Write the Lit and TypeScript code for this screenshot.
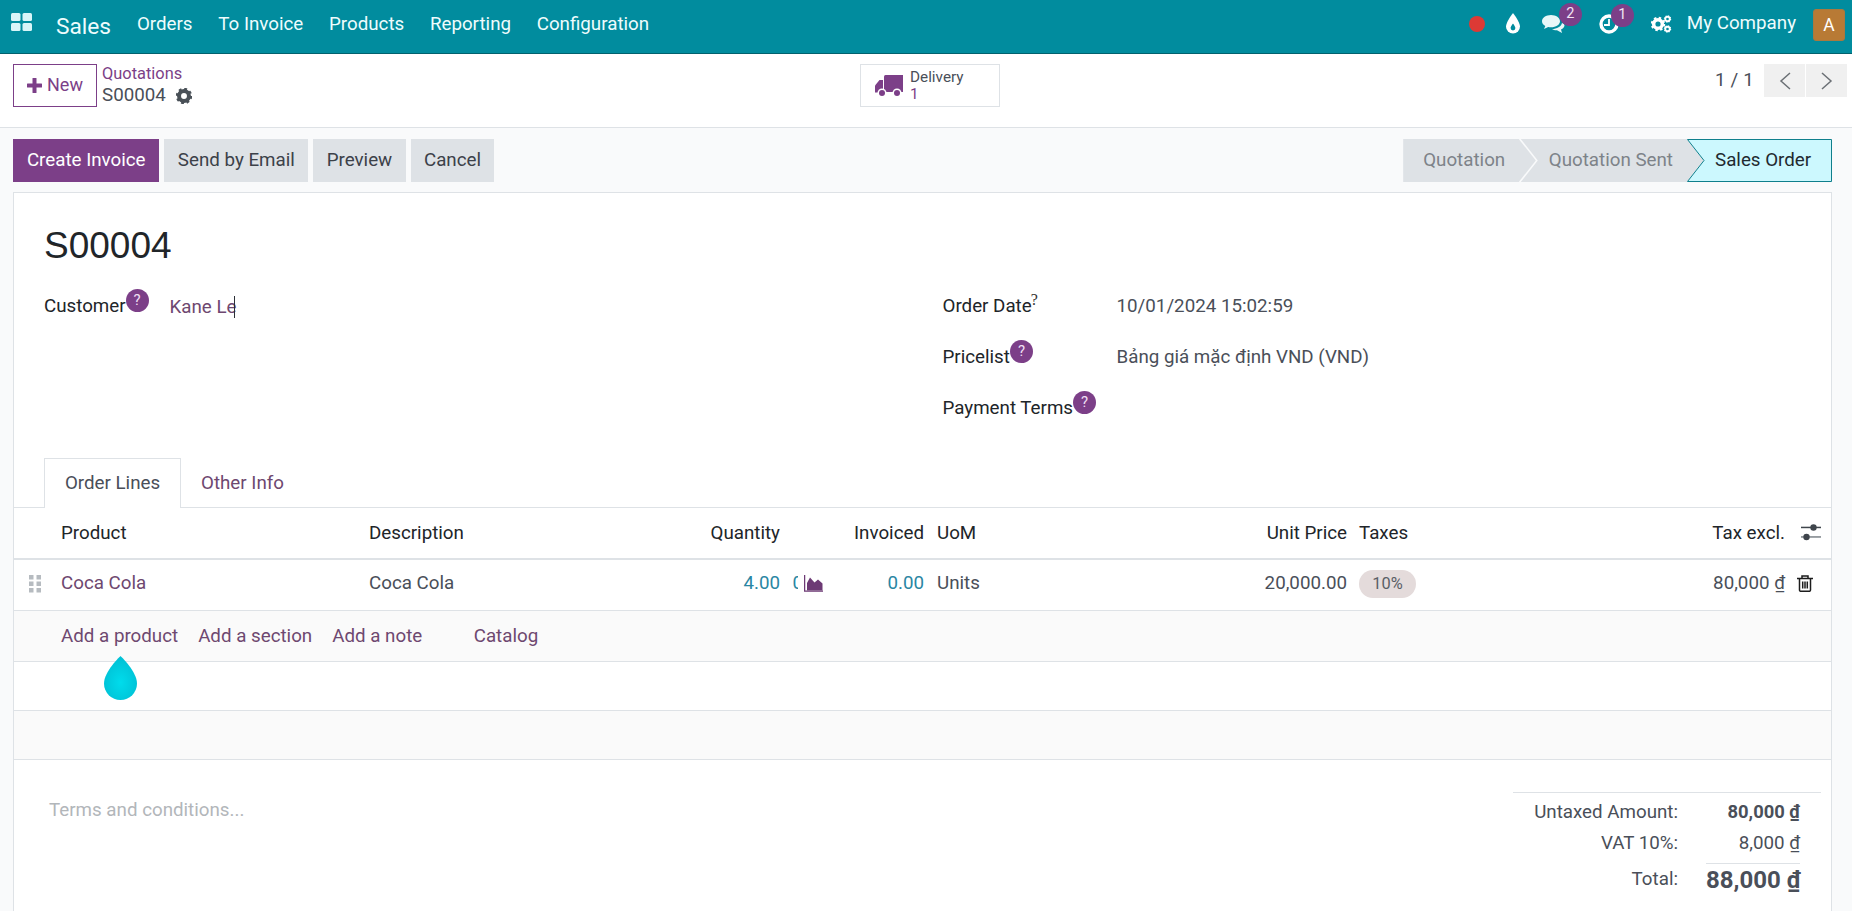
import { LitElement, html, css, svg } from "lit";
import { customElement } from "lit/decorators.js";

const gear = (cx: number, cy: number, r: number, c: string) => svg`
  <circle cx=${cx} cy=${cy} r=${r * 0.62} fill="none" stroke=${c} stroke-width=${r * 0.5}></circle>
  <circle cx=${cx} cy=${cy} r=${r * 0.88} fill="none" stroke=${c} stroke-width=${r * 0.3} stroke-dasharray=${`${r * 0.35} ${r * 0.341}`}></circle>`;

@customElement("app-root")
export class AppRoot extends LitElement {
  static styles = css`
    :host { display: flex; flex-direction: column; width: 1852px; height: 911px; overflow: hidden; background: #f9fafb; font-family: Roboto, sans-serif; font-size: 18.75px; color: #4a4f59; line-height: 1.2; }
    * { box-sizing: border-box; }
    svg { display: block; flex: none; }
    .top { height: 54px; flex: none; background: #018c9e; border-bottom: 1px solid #02616d; color: #eefcfd; display: flex; align-items: center; padding: 0 7px 0 11px; }
    .grid-ico { margin-right: 24px; margin-top: -9px; }
    .brand { font-size: 22.7px; margin-right: 13px; }
    .menu { padding: 0 12.85px; margin-top: -4px; }
    .spacer { flex: 1; }
    .sys { display: flex; align-items: center; margin-top: -6px; }
    .rec { width: 16px; height: 16px; border-radius: 50%; background: #dc3a35; margin-right: 20px; }
    .with-badge { position: relative; }
    .badge { position: absolute; width: 23px; height: 23px; border-radius: 50%; background: #7c3f88; color: #f2e6f4; font-size: 14.5px; text-align: center; line-height: 21px; }
    .company { margin-left: 15px; margin-right: 17px; white-space: nowrap; }
    .avatar { width: 32px; height: 32px; border-radius: 3px; background: #b87a35; border: 1px solid #a9793f; color: #fff; text-align: center; line-height: 30px; font-size: 17.5px; margin-top: 2px; }

    .cp { height: 74px; flex: none; background: #fff; border-bottom: 1px solid #dee2e6; display: flex; align-items: flex-start; padding: 10px 5px 0 13px; }
    .cp-left { width: 847px; display: flex; align-items: flex-start; }
    .new { width: 84px; height: 43px; border: 1px solid #7c3f88; display: flex; align-items: center; justify-content: center; gap: 5px; color: #7c3f88; font-size: 18px; padding-bottom: 1px; }
    .crumbs { margin-left: 5px; }
    .crumb1 { color: #7c3f88; font-size: 16.4px; line-height: 20px; }
    .crumb2 { line-height: 23px; display: flex; align-items: center; gap: 10px; }
    .delivery { width: 140px; height: 43px; border: 1px solid #dee2e6; display: flex; align-items: center; padding-left: 14px; gap: 7px; }
    .delivery-text { font-size: 15.3px; line-height: 17px; }
    .delivery-n { color: #7c3f88; }
    .pager { margin-left: auto; display: flex; align-items: center; height: 33px; }
    .pager-num { margin-right: 9px; letter-spacing: .2px; }
    .pg { width: 41px; height: 33px; background: #f0f0f0; margin-left: 1px; display: flex; align-items: center; justify-content: center; }

    .actions { flex: none; display: flex; padding: 11px 20px 10px 13px; }
    .btn { height: 43px; display: flex; align-items: center; background: #dee2e6; color: #3c4149; padding: 0 13.4px; margin-right: 5px; }
    .btn.primary { background: #7c3f88; color: #fff; padding: 0 13.9px; }
    .status { margin-left: auto; display: flex; height: 43px; }
    .st { display: flex; align-items: center; background: #dee2e6; color: #7d8389; height: 43px; white-space: nowrap; }
    .st1 { padding: 0 30.6px 0 20px; clip-path: polygon(0 0, calc(100% - 17px) 0, 100% 50%, calc(100% - 17px) 100%, 0 100%); }
    .st2 { padding: 0 31px 0 28px; margin-left: -15px; clip-path: polygon(0 0, calc(100% - 17px) 0, 100% 50%, calc(100% - 17px) 100%, 0 100%, 17px 50%); }
    .st3 { position: relative; padding: 0 21px 0 28px; margin-left: -17px; background: none; color: #1f2a30; width: 145px; }
    .st3 svg { position: absolute; left: 0; top: 0; }
    .st3 span { position: relative; }

    .sheet { flex: 1; min-height: 0; margin: 0 20px 0 13px; background: #fff; border: 1px solid #dee2e6; border-bottom: 0; }
    .title { font-family: "Liberation Sans", sans-serif; font-size: 37px; color: #212529; padding: 31px 30px 0; line-height: 44px; height: 88px; }
    .form { display: grid; grid-template-columns: 898.5px 1fr; padding-left: 30px; height: 177px; }
    .frow { display: flex; align-items: center; height: 51px; }
    .lab { color: #212529; display: flex; align-items: center; }
    .l1 { width: 125.5px; } .l2 { width: 174px; }
    .help { width: 23px; height: 23px; border-radius: 50%; background: #7c3f88; color: #f0dff3; font-size: 15px; text-align: center; line-height: 22px; margin: -12px 0 0 0; flex: none; }
    .sup { font-size: 16px; margin: -14px 0 0 -1px; font-family: "Liberation Serif", serif; color: #333; }
    .link { color: #6e4870; }
    .kane { white-space: nowrap; padding-top: 1px; }
    .caret { display: inline-block; width: 1px; height: 22px; background: #2b2f36; vertical-align: -5px; margin-left: -2px; }

    .tabs { display: flex; height: 50px; border-bottom: 1px solid #dee2e6; padding-left: 30px; }
    .tab { height: 50px; display: flex; align-items: center; padding: 0 20px 0 17px; }
    .tab.on { width: 137px; border: 1px solid #dee2e6; border-bottom: 0; background: #fff; justify-content: center; padding: 0; margin-right: 3px; }
    .tab:not(.on) { color: #6e4870; }

    .tr { display: grid; grid-template-columns: 47px 308px 231px 180px 144px 276px 147px 253px 185px 1fr; align-items: center; }
    .th { height: 52px; border-bottom: 2px solid #dee2e6; color: #212529; }
    .td { height: 51px; border-bottom: 1px solid #dee2e6; padding-bottom: 3px; }
    .r { text-align: right; white-space: nowrap; }
    .pl { padding-left: 13px; }
    .pl12 { padding-left: 12px; }
    .qty { color: #2a86a3; }
    .inv { display: flex; align-items: center; }
    .clip { width: 5px; overflow: hidden; margin-left: 12.5px; color: #2a86a3; white-space: nowrap; }
    .inv svg { margin-left: 6px; }
    .inv .qty { margin-left: auto; }
    .tag { display: inline-block; height: 28px; line-height: 28px; width: 57px; border-radius: 14px; background: #e4dbdb; text-align: center; font-size: 16.4px; color: #5a5f66; margin-left: -1px; }
    .end { display: flex; padding-left: 12px; }
    .slide { padding-left: 15px; }
    .grip { padding-left: 15px; }
    .addrow { height: 51px; background: #fafafa; border-bottom: 1px solid #dee2e6; display: flex; align-items: center; padding-left: 47px; color: #6e4870; position: relative; }
    .addrow span { margin-right: 20px; }
    .addrow span.cat { margin-left: 31.5px; }
    .drop { position: absolute; left: 90px; top: 45px; z-index: 2; }
    .blank { height: 49px; border-bottom: 1px solid #dee2e6; }
    .blank.g { background: #fafafa; }

    .bottom { display: flex; justify-content: space-between; padding: 0 10px 0 35px; }
    .terms { color: #b2b6ba; margin-top: 39px; }
    .totals { width: 308px; margin-top: 32px; border-top: 1px solid #dee2e6; padding-top: 4px; }
    .tot { display: grid; grid-template-columns: 165px 122px; align-items: center; height: 31px; }
    .tot > div:first-child { text-align: right; }
    .tot > div:last-child { text-align: right; white-space: nowrap; }
    .b { font-weight: 700; font-size: 18.4px; }
    .big { font-size: 24px; font-weight: 700; border-top: 1px solid #dee2e6; margin-left: 28px; line-height: 32px; }
    .tot.t3 { height: 33px; margin-top: 4px; }
  `;

  render() {
    return html`
      <div class="top">
        <svg class="grid-ico" width="21" height="18" viewBox="0 0 21 18" fill="#d8f5f8"><rect width="9.5" height="8" rx="1.5"/><rect x="11.5" width="9.5" height="8" rx="1.5"/><rect y="10" width="9.5" height="8" rx="1.5"/><rect x="11.5" y="10" width="9.5" height="8" rx="1.5"/></svg>
        <div class="brand">Sales</div>
        <div class="menu">Orders</div><div class="menu">To Invoice</div><div class="menu">Products</div><div class="menu">Reporting</div><div class="menu">Configuration</div>
        <div class="spacer"></div>
        <div class="sys">
          <div class="rec"></div>
          <svg width="16" height="21" viewBox="0 0 16 21" style="margin-right:21px"><path d="M8 0C8 0 1 9 1 13.5a7 7 0 0 0 14 0C15 9 8 0 8 0Z" fill="#fff"/><path d="M8 10.5c0 0-2.4 3-2.4 4.6a2.4 2.4 0 0 0 4.8 0c0-1.6-2.4-4.6-2.4-4.6Z" fill="#018c9e"/></svg>
          <div class="with-badge" style="margin-right:32px">
            <svg width="24" height="19" viewBox="0 0 24 19" fill="#e8f7f8"><path d="M9 1C4 1 0 3.8 0 7.2c0 2 1.3 3.7 3.3 4.8L2 15l4.2-2.1c.9.2 1.8.3 2.8.3 5 0 9-2.6 9-6S14 1 9 1Z"/><path d="M20 9c-.8 3.5-5 6-10 6l2 1c1 .3 2 .4 3 .3l5 2.700-1-3.500c2-1 3.500-2.500 3.500-4 0-1-.8-2-2.500-2.500Z"/></svg>
            <div class="badge" style="left:17px;top:-11px">2</div>
          </div>
          <div class="with-badge" style="margin-right:31px">
            <svg width="22" height="20" viewBox="0 0 22 20" fill="none" stroke="#fff"><circle cx="11" cy="10" r="8" stroke-width="3.400"/><path d="M11 5v6H6" stroke-width="1.800"/></svg>
            <div class="badge" style="left:13px;top:-10px">1</div>
          </div>
          <svg width="21" height="18" viewBox="0 0 21 18">${gear(7, 9, 7, "#fff")}${gear(16.5, 4, 3.6, "#fff")}${gear(16.5, 14, 3.6, "#fff")}</svg>
          <div class="company">My Company</div>
          <div class="avatar">A</div>
        </div>
      </div>

      <div class="cp">
        <div class="cp-left">
          <div class="new"><svg width="15" height="15" viewBox="0 0 15 15" fill="#7c3f88"><rect x="5.500" width="4" height="15" rx=".5"/><rect y="5.500" width="15" height="4" rx=".5"/></svg>New</div>
          <div class="crumbs">
            <div class="crumb1">Quotations</div>
            <div class="crumb2">S00004 <svg width="16" height="16" viewBox="0 0 16 16">${gear(8, 8, 8, "#495057")}</svg></div>
          </div>
        </div>
        <div class="delivery">
          <svg width="28" height="22" viewBox="0 0 28 22" fill="#7c3f88"><path d="M9 1.500Q9 0 10.500 0H28V17H9Z"/><path d="M8 5H4.500L0 10.500V17.500H8Z"/><circle cx="7" cy="18" r="4.500" fill="#fff"/><circle cx="7" cy="18" r="3"/><circle cx="22" cy="18" r="4.500" fill="#fff"/><circle cx="22" cy="18" r="3"/></svg>
          <div class="delivery-text"><div>Delivery</div><div class="delivery-n">1</div></div>
        </div>
        <div class="pager">
          <div class="pager-num">1 / 1</div>
          <div class="pg"><svg width="12" height="18" viewBox="0 0 12 18" fill="none" stroke="#6b7075" stroke-width="1.500"><path d="M11 1 2 9l9 8"/></svg></div>
          <div class="pg"><svg width="12" height="18" viewBox="0 0 12 18" fill="none" stroke="#6b7075" stroke-width="1.500"><path d="M1 1l9 8-9 8"/></svg></div>
        </div>
      </div>

      <div class="actions">
        <div class="btn primary">Create Invoice</div>
        <div class="btn">Send by Email</div>
        <div class="btn">Preview</div>
        <div class="btn">Cancel</div>
        <div class="status">
          <div class="st st1">Quotation</div>
          <div class="st st2">Quotation Sent</div>
          <div class="st st3"><svg width="145" height="43" viewBox="0 0 145 43"><path d="M.5.500H144.500V42.500H.5L17 21.500Z" fill="#ccf8fe" stroke="#0f7f8c"/></svg><span>Sales Order</span></div>
        </div>
      </div>

      <div class="sheet">
        <div class="title">S00004</div>
        <div class="form">
          <div>
            <div class="frow"><div class="lab l1">Customer<span class="help">?</span></div><div class="link kane">Kane Le<span class="caret"></span></div></div>
          </div>
          <div>
            <div class="frow"><div class="lab l2">Order Date<span class="sup">?</span></div><div>10/01/2024 15:02:59</div></div>
            <div class="frow"><div class="lab l2">Pricelist<span class="help">?</span></div><div>Bảng giá mặc định VND (VND)</div></div>
            <div class="frow"><div class="lab l2">Payment Terms<span class="help">?</span></div></div>
          </div>
        </div>
        <div class="tabs"><div class="tab on">Order Lines</div><div class="tab">Other Info</div></div>
        <div class="tr th">
          <div></div><div>Product</div><div>Description</div><div class="r">Quantity</div><div class="r">Invoiced</div><div class="pl">UoM</div><div class="r">Unit Price</div><div class="pl12">Taxes</div><div class="r">Tax excl.</div>
          <div class="end slide"><svg width="21" height="20" viewBox="0 0 21 20" fill="#3f454c"><rect x="1" y="3.700" width="20" height="1.500"/><rect x="1" y="13.200" width="20" height="1.500" fill="#7d8389"/><circle cx="13.500" cy="4.500" r="3.200"/><circle cx="6.500" cy="14" r="3.200"/></svg></div>
        </div>
        <div class="tr td">
          <div class="grip"><svg width="12" height="18" viewBox="0 0 12 18" fill="#b6bbc0"><rect width="4.500" height="4.500"/><rect x="7.500" width="4.500" height="4.500"/><rect y="6.500" width="4.500" height="4.500"/><rect x="7.500" y="6.500" width="4.500" height="4.500"/><rect y="13" width="4.500" height="4.500"/><rect x="7.500" y="13" width="4.500" height="4.500"/></svg></div>
          <div class="link">Coca Cola</div><div>Coca Cola</div><div class="r qty">4.00</div>
          <div class="inv"><span class="clip">0</span><svg width="19" height="17" viewBox="0 0 19 17"><path d="M.6 0V16.200H19" fill="none" stroke="#6d3a75" stroke-width="1.300"/><path d="M3 15.500V8L6 2.500 10.500 7.500 14 4.500 18.500 8.500V15.500Z" fill="#6d3a75"/></svg><span class="qty">0.00</span></div>
          <div class="pl">Units</div><div class="r">20,000.00</div>
          <div class="pl"><span class="tag">10%</span></div>
          <div class="r">80,000 ₫</div>
          <div class="end"><svg width="16" height="17" viewBox="0 0 16 17" fill="none" stroke="#1c1c1c" stroke-width="1.500"><path d="M0 3.500H16M5 3.500V1h6v2.500M2.500 3.500V15a1.300 1.300 0 0 0 1.300 1.300h8.400A1.300 1.300 0 0 0 13.500 15V3.500M5.700 6.500V13.500M8 6.500V13.500M10.300 6.500V13.500"/></svg></div>
        </div>
        <div class="addrow">
          <span>Add a product</span><span>Add a section</span><span>Add a note</span><span class="cat">Catalog</span>
          <svg class="drop" width="33" height="44" viewBox="0 0 33 44"><defs><radialGradient id="dg" cx=".5" cy=".6" r=".6"><stop offset="0" stop-color="#00dcec"/><stop offset="1" stop-color="#00bfd4"/></radialGradient></defs><path d="M16.500 0C16.500 0 0 15.500 0 27.500a16.500 16.500 0 0 0 33 0C33 15.500 16.500 0 16.500 0Z" fill="url(#dg)"/></svg>
        </div>
        <div class="blank"></div>
        <div class="blank g"></div>
        <div class="bottom">
          <div class="terms">Terms and conditions...</div>
          <div class="totals">
            <div class="tot"><div>Untaxed Amount:</div><div class="b">80,000 ₫</div></div>
            <div class="tot"><div>VAT 10%:</div><div>8,000 ₫</div></div>
            <div class="tot t3"><div>Total:</div><div class="big">88,000 ₫</div></div>
          </div>
        </div>
      </div>
    `;
  }
}
